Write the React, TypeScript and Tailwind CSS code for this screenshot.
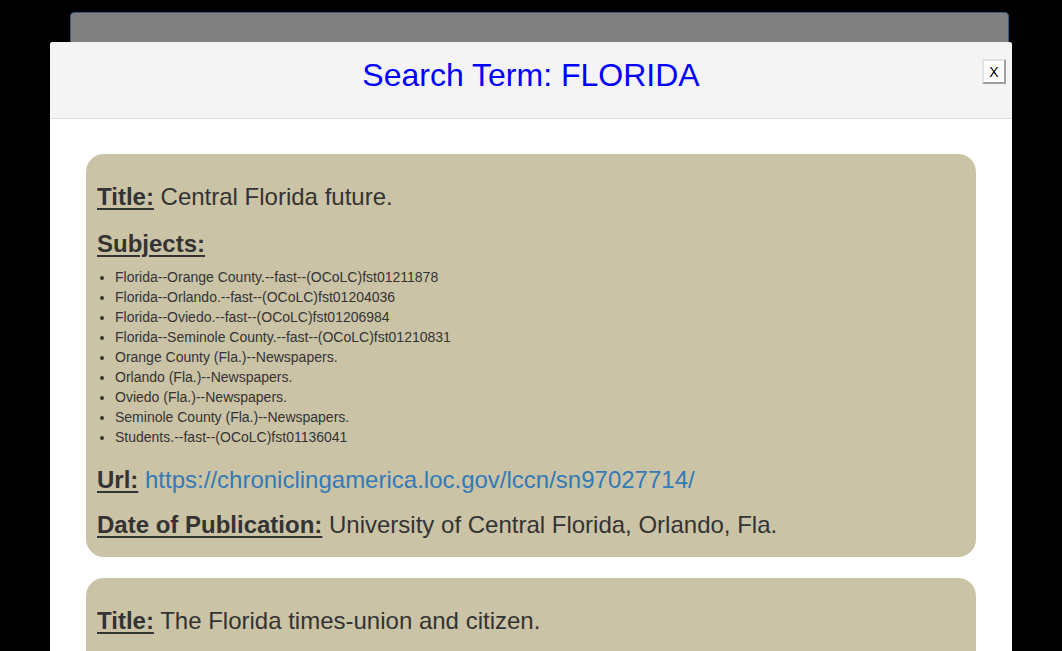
import React from "react";

const subjects = [
  "Florida--Orange County.--fast--(OCoLC)fst01211878",
  "Florida--Orlando.--fast--(OCoLC)fst01204036",
  "Florida--Oviedo.--fast--(OCoLC)fst01206984",
  "Florida--Seminole County.--fast--(OCoLC)fst01210831",
  "Orange County (Fla.)--Newspapers.",
  "Orlando (Fla.)--Newspapers.",
  "Oviedo (Fla.)--Newspapers.",
  "Seminole County (Fla.)--Newspapers.",
  "Students.--fast--(OCoLC)fst01136041",
];

export default function App() {
  return (
    <div
      className="w-[1062px] h-[651px] bg-black overflow-hidden relative"
      style={{ fontFamily: '"Liberation Sans", Arial, sans-serif' }}
    >
      {/* background bar */}
      <div className="absolute left-[70px] top-[12px] w-[939px] h-[60px] bg-[#808080] border border-[#375a7f] rounded-t-[4px]" />

      {/* modal */}
      <div className="absolute left-[50px] top-[42px] w-[962px] h-[609px] bg-white rounded-t-[3px] overflow-hidden">
        <div className="relative h-[77px] bg-[#f4f4f4] border-b border-[#dddddd] flex items-center justify-center">
          <h1 className="text-[32px] leading-[36px] text-[#0000ff] -mt-[10px]">Search Term: FLORIDA</h1>
          <button className="absolute right-[6px] top-[17px] w-[24px] h-[25px] bg-white border-2 border-t-[#e3e3e3] border-l-[#e3e3e3] border-r-[#a0a0a0] border-b-[#a0a0a0] text-[14px] leading-[18px] text-black flex items-center justify-center">
            X
          </button>
        </div>

        <div className="px-[36px] pt-[35px] flex flex-col gap-[21px]">
          <div className="bg-[#cbc3a6] rounded-[18px] px-[11px] pt-[31px] pb-[20px] text-[#333333]">
            <div className="text-[24px] leading-[24px]">
              <span className="font-bold underline underline-offset-[3px]">Title:</span> Central Florida future.
            </div>
            <div className="mt-[23px] text-[24px] leading-[24px] font-bold underline underline-offset-[3px]">
              Subjects:
            </div>
            <ul className="mt-[11px] list-disc pl-[18px] text-[14px] leading-[20px]">
              {subjects.map((s) => (
                <li key={s}>{s}</li>
              ))}
            </ul>
            <div className="mt-[21px] text-[24px] leading-[24px]">
              <span className="font-bold underline underline-offset-[3px]">Url:</span>{" "}
              <a className="text-[#337ab7]">https://chroniclingamerica.loc.gov/lccn/sn97027714/</a>
            </div>
            <div className="mt-[21px] text-[24px] leading-[24px]">
              <span className="font-bold underline underline-offset-[3px]">Date of Publication:</span> University of Central Florida, Orlando, Fla.
            </div>
          </div>

          <div className="bg-[#cbc3a6] rounded-[18px] px-[11px] pt-[31px] pb-[40px] text-[#333333]">
            <div className="text-[24px] leading-[24px]">
              <span className="font-bold underline underline-offset-[3px]">Title:</span> The Florida times-union and citizen.
            </div>
          </div>
        </div>
      </div>
    </div>
  );
}
